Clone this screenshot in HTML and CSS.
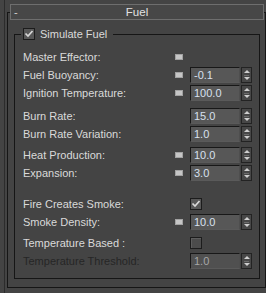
FILE: index.html
```html
<!DOCTYPE html>
<html lang="en">
<head>
  <meta charset="UTF-8" />
  <title>Fuel</title>
  <link rel="stylesheet" href="styles.css">
</head>
<body>
  <div class="panel">
    <div class="rollout">
      <div class="rollout-title">
        <span class="toggle">-</span>
        <span class="title-text">Fuel</span>
        <span></span>
      </div>
      <fieldset class="group">
        <legend>
          <span class="check"><svg width="10" height="10" viewBox="0 0 10 10"><path d="M1.5 4.5 L4 7 L8.5 2" fill="none" stroke="#d8d8d8" stroke-width="1.7"/></svg></span>
          <span>Simulate Fuel</span>
        </legend>

        <div class="section">
          <div class="row">
            <span class="label">Master Effector:</span>
            <span class="pin"></span>
            <span class="field"></span>
          </div>
          <div class="row">
            <span class="label">Fuel Buoyancy:</span>
            <span class="pin"></span>
            <span class="field"><span class="num">-0.1</span><span class="arrows"></span></span>
          </div>
          <div class="row">
            <span class="label">Ignition Temperature:</span>
            <span class="pin"></span>
            <span class="field"><span class="num">100.0</span><span class="arrows"></span></span>
          </div>
        </div>

        <div class="section s-burn">
          <div class="row">
            <span class="label">Burn Rate:</span>
            <span class="pin none"></span>
            <span class="field"><span class="num">15.0</span><span class="arrows"></span></span>
          </div>
          <div class="row">
            <span class="label">Burn Rate Variation:</span>
            <span class="pin none"></span>
            <span class="field"><span class="num">1.0</span><span class="arrows"></span></span>
          </div>
        </div>

        <div class="section s-heat">
          <div class="row">
            <span class="label">Heat Production:</span>
            <span class="pin"></span>
            <span class="field"><span class="num">10.0</span><span class="arrows"></span></span>
          </div>
          <div class="row">
            <span class="label">Expansion:</span>
            <span class="pin"></span>
            <span class="field"><span class="num">3.0</span><span class="arrows"></span></span>
          </div>
        </div>

        <div class="section s-smoke">
          <div class="row">
            <span class="label">Fire Creates Smoke:</span>
            <span class="pin none"></span>
            <span class="field"><span class="check"><svg width="10" height="10" viewBox="0 0 10 10"><path d="M1.5 4.5 L4 7 L8.5 2" fill="none" stroke="#d8d8d8" stroke-width="1.7"/></svg></span></span>
          </div>
          <div class="row">
            <span class="label">Smoke Density:</span>
            <span class="pin"></span>
            <span class="field"><span class="num">10.0</span><span class="arrows"></span></span>
          </div>
        </div>

        <div class="section s-temp">
          <div class="row">
            <span class="label">Temperature Based :</span>
            <span class="pin none"></span>
            <span class="field"><span class="check empty"></span></span>
          </div>
          <div class="row disabled">
            <span class="label">Temperature Threshold:</span>
            <span class="pin none"></span>
            <span class="field"><span class="num">1.0</span><span class="arrows"></span></span>
          </div>
        </div>
      </fieldset>
    </div>
  </div>
</body>
</html>
```

FILE: styles.css
```css
body { margin: 0; background: #444444; font-family: "Liberation Sans", Arial, sans-serif; font-size: 11px; color: #dadada; }
.panel { margin-left: 4px; border-left: 1px solid #2c2c2c; height: 293px; box-sizing: border-box; padding-top: 12px; }
.rollout { margin-left: 2px; height: 276px; box-sizing: border-box; border: 1px solid #161616; }
.rollout-title { margin: -9px 1px 0 2px; height: 16px; box-sizing: border-box; border: 1px solid #6e6e6e; background: #474747; display: grid; grid-template-columns: 1fr auto 1fr; align-items: center; color: #e2e2e2; }
.rollout-title .toggle { padding-left: 3px; color: #d0d0d0; line-height: 12px; }
.rollout-title .title-text { font-size: 11.5px; line-height: 14px; }

.group { margin: 7px 5px 0 6px; border: 1px solid #161616; padding: 7px 7px 8px 8px; min-width: 0; }
.group legend { display: flex; align-items: center; height: 14px; padding: 0 6px 0 2px; margin-left: -2px; gap: 5px; }

.check { display: flex; align-items: center; justify-content: center; width: 12px; height: 12px; box-sizing: border-box; border: 1px solid #1c1c1c; background: #575757; }
.check.empty { background: #4c4c4c; box-shadow: inset 1px 1px 0 #5e5e5e; }

.s-burn { margin-top: 5px; }
.s-heat { margin-top: 3px; }
.s-smoke { margin-top: 13px; }
.s-temp { margin-top: 3px; }

.row { display: flex; align-items: center; height: 18px; }
.label { flex: 1; white-space: nowrap; }
.pin { width: 8px; height: 6px; box-sizing: border-box; background: #c6c6c6; border: 1px solid #a2a2a2; margin-right: 7px; }
.pin.none { visibility: hidden; }
.field { display: flex; align-items: center; width: 62px; height: 16px; }
.num { width: 50px; height: 16px; box-sizing: border-box; border-top: 1px solid #181818; border-left: 1px solid #181818; border-right: 1px solid #4e4e4e; border-bottom: 1px solid #5a5a5a; background: #575757; color: #d8e0ee; padding-left: 3px; line-height: 14px; }
.arrows { position: relative; width: 11px; height: 16px; margin-left: 1px; box-sizing: border-box; border: 1px solid #232323; background: #474747 linear-gradient(#6c6c6c, #6c6c6c) center / 5px 1px no-repeat; }
.arrows::before, .arrows::after { content: ""; position: absolute; left: 2px; border-left: 3px solid transparent; border-right: 3px solid transparent; }
.arrows::before { top: 2px; border-bottom: 3px solid #cfcfcf; }
.arrows::after { bottom: 2px; border-top: 3px solid #cfcfcf; }

.disabled .label { color: #262626; }
.disabled .num { color: #a6a6a6; background: #505050; }
```
